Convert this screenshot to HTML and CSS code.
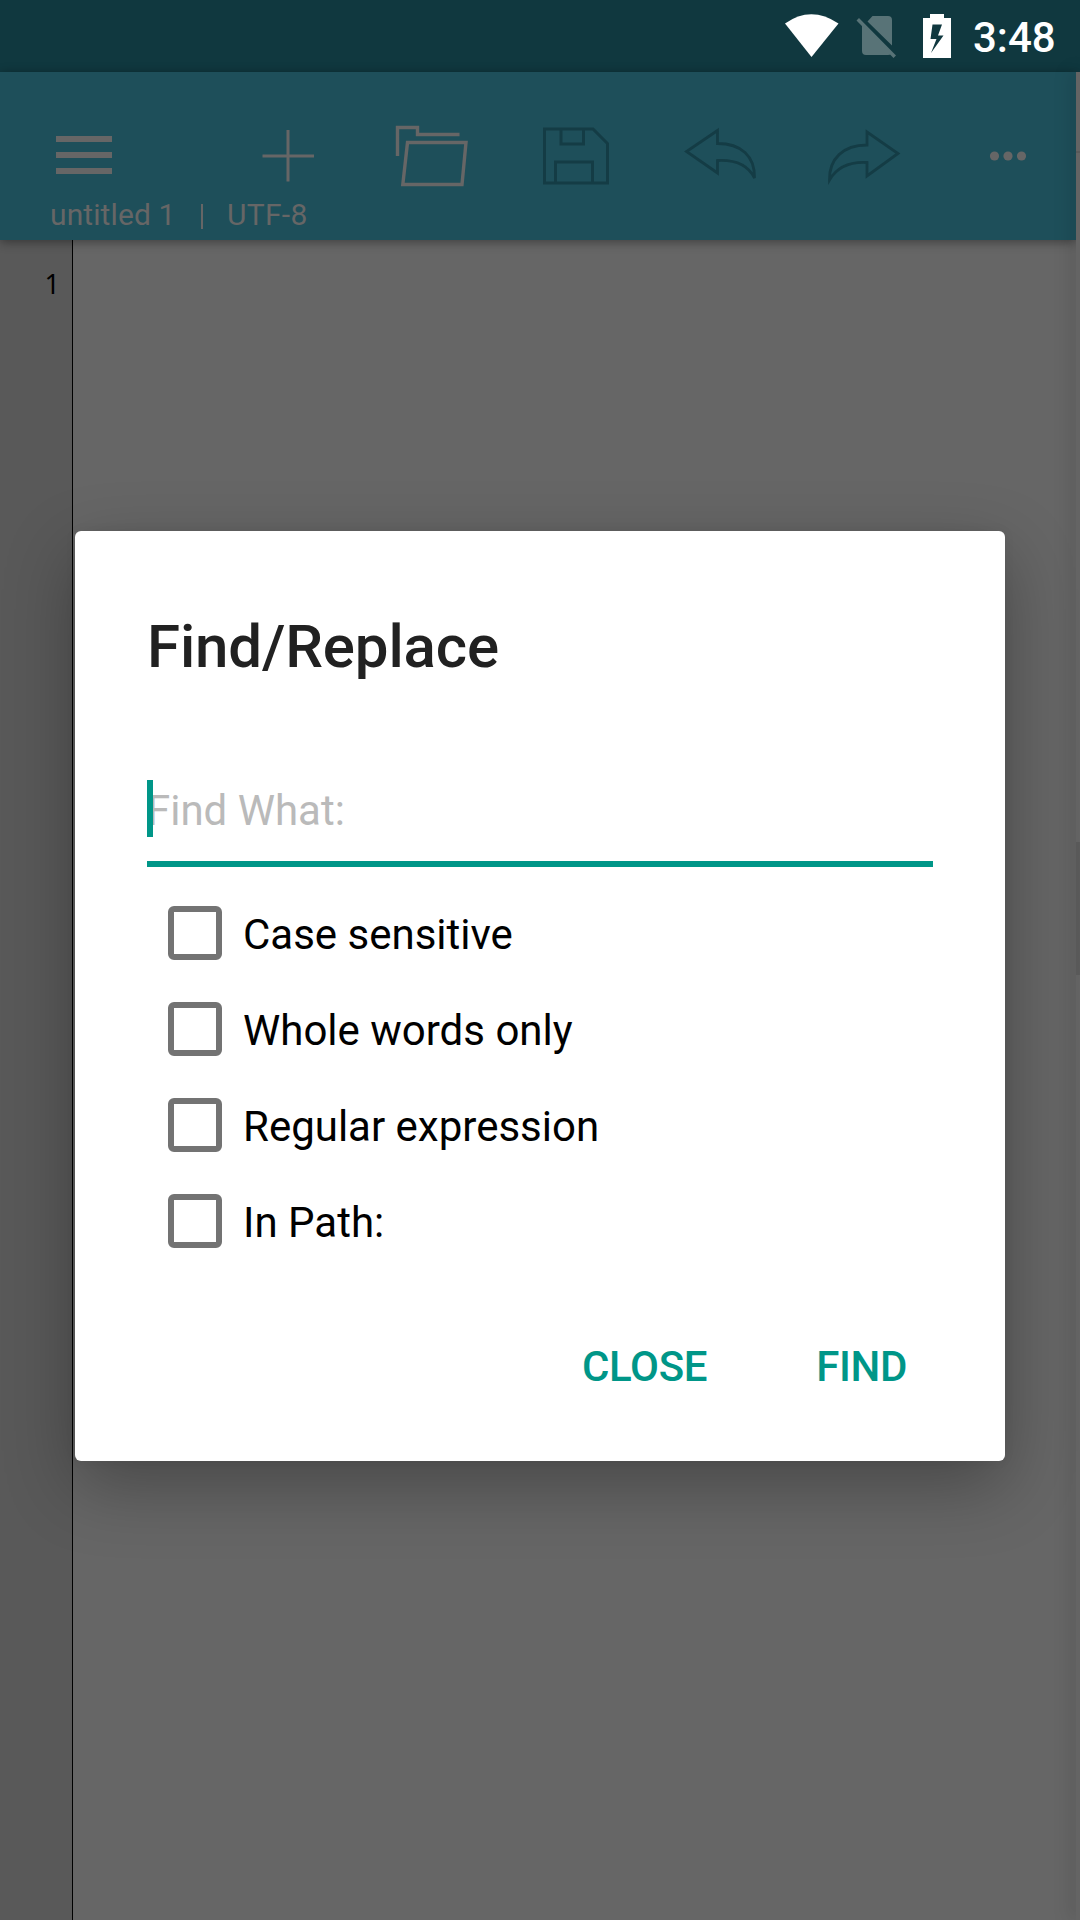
FILE: index.html
```html
<!DOCTYPE html>
<html lang="en">
<head>
<meta charset="utf-8">
<title>Find/Replace</title>
<link rel="stylesheet" href="styles.css">
</head>
<body>
<div class="screen">
  <header class="status">
    <svg class="status-icons" width="189" height="72" viewBox="0 0 189 72">
      <path fill="#fff" d="M0 23.500Q26 5 53.500 23.500L26.500 57Z"/>
      <path fill="#587377" d="M87.500 16H103Q107 16 107 20V45.500L82.500 21.500ZM77 25L106 54Q105 55 103 55H81Q77 55 77 51ZM71.500 20.500L74 18L111 55.500L108.500 58Z"/>
      <path fill="#fff" fill-rule="evenodd" d="M145 14H159V18H166V58H138V18H145ZM147.500 24.500L145.500 39H151.500L146 53L158.500 35.500H153L157 24.500Z"/>
    </svg>
    <span class="clock">3:48</span>
  </header>
  <div class="app">
    <main class="main">
      <div class="toolbar">
        <svg class="tools" width="1076" height="110" viewBox="0 72 1076 110" fill="none">
          <path d="M56 139H112M56 155H112M56 171H112" stroke="#666" stroke-width="6"/>
          <path d="M288 130V181.500M262.500 156H314" stroke="#666" stroke-width="3"/>
          <path d="M397.500 156V127.500H417.500V134.500H459.500M407.500 142.500H466L462 184.500H402.800Z" stroke="#666" stroke-width="3.400"/>
          <path d="M544.500 129H593L607.500 143.500V183H544.500ZM561 129V144H583.500V129M555.500 183V162H592.500V183" stroke="#143c45" stroke-width="3"/>
          <path d="M717.500 130.500V143.500C741 143.500 755 156 754.500 178C748 165 736 159.500 717.500 160.500V173L686.500 151.500Z" stroke="#143c45" stroke-width="2.800"/>
          <path d="M867 132V145C843 145 829 159 829.500 180C837 167 849 161.500 867 162.500V176L898 153.500Z" stroke="#143c45" stroke-width="2.800"/>
          <g fill="#666"><circle cx="994.500" cy="156" r="4.600"/><circle cx="1008" cy="156" r="4.600"/><circle cx="1021.500" cy="156" r="4.600"/></g>
        </svg>
        <div class="doc"><span class="doc-name">untitled 1</span><i class="bar"></i><span class="doc-enc">UTF-8</span></div>
      </div>
      <div class="editor"><div class="gutter">1</div><div class="page"></div></div>
    </main>
    <aside class="drawer"><i class="panel-top"></i><i class="panel-gap"></i><i class="panel-bottom"></i></aside>
  </div>
  <section class="dialog">
    <h1 class="title">Find/Replace</h1>
    <div class="field"><span class="hint">Find What:</span><i class="caret"></i></div>
    <ul class="options">
      <li class="option"><i class="box"></i><span>Case sensitive</span></li>
      <li class="option"><i class="box"></i><span>Whole words only</span></li>
      <li class="option"><i class="box"></i><span>Regular expression</span></li>
      <li class="option"><i class="box"></i><span>In Path:</span></li>
    </ul>
    <div class="actions"><span class="action">CLOSE</span><span class="action">FIND</span></div>
  </section>
</div>
</body>
</html>
```
FILE: styles.css
```css
* { box-sizing: border-box; }
body { margin: 0; font-family: Roboto, sans-serif; }
.screen { position: relative; display: flex; flex-direction: column; width: 1080px; height: 1920px; overflow: hidden; background: #666; }
.status { display: flex; justify-content: flex-end; height: 72px; padding-right: 29px; background: #10383f; color: #fff; }
.status-icons { flex: none; }
.clock { width: 78px; margin-left: -1px; font-size: 42px; line-height: 75px; font-weight: 500; white-space: nowrap; }
.app { display: flex; flex: 1; }
.main { display: flex; flex-direction: column; width: 1076px; }
.toolbar { z-index: 1; height: 168px; background: #1e4f5a; box-shadow: 0 2px 10px rgba(0,0,0,.4); }
.tools { display: block; overflow: visible; }
.doc { display: flex; align-items: center; height: 65px; padding-left: 50px; font-size: 30px; letter-spacing: .1px; white-space: nowrap; color: #666; }
.doc-name { width: 151px; }
.bar { width: 2px; height: 25px; margin: 3px 24px 0 0; background: #666; }
.doc-enc { letter-spacing: .3px; }
.editor { display: flex; flex: 1; }
.gutter { width: 73px; padding: 26px 12px 0 0; border-right: 1px solid #000; background: #595959; color: #000; font: 27px/36px "Noto Sans", sans-serif; text-align: right; }
.page { flex: 1; }
.drawer { z-index: 2; display: flex; flex-direction: column; width: 4px; background: #646464; box-shadow: -2px 0 18px rgba(0,0,0,.35); }
.panel-top { height: 770px; background: linear-gradient(#646464 79px, #5a5a5a 79px, #5a5a5a 81px, #646464 81px); }
.panel-gap { height: 133px; background: #5a5a5a; }
.panel-bottom { flex: 1; }
.dialog { position: absolute; z-index: 3; left: 75px; top: 531px; width: 930px; height: 930px; display: flex; flex-direction: column; padding: 81px 72px 0; border-radius: 6px; background: #fff; box-shadow: 0 24px 70px rgba(0,0,0,.3), 0 0 12px rgba(0,0,0,.06); }
.title { margin: 0; font-size: 60px; line-height: 70px; font-weight: 500; letter-spacing: -.15px; color: #212121; }
.field { position: relative; height: 91px; margin-top: 94px; padding-top: 10px; border-bottom: 6px solid #009688; font-size: 42px; line-height: 50px; color: #bababa; }
.caret { position: absolute; left: 0; top: 4px; width: 6px; height: 57px; background: #009688; }
.options { display: flex; flex-direction: column; gap: 42px; margin: 39px 0 0; padding: 0 0 0 21px; list-style: none; }
.option { display: flex; align-items: center; gap: 21px; height: 54px; font-size: 42px; color: #000; }
.option span { padding-top: 2px; }
.box { width: 54px; height: 54px; border: 6px solid #737373; border-radius: 6px; }
.actions { display: flex; justify-content: flex-end; gap: 109px; margin-top: 94px; padding-right: 26px; font-size: 42px; line-height: 50px; font-weight: 500; letter-spacing: -.35px; color: #009688; }
```
